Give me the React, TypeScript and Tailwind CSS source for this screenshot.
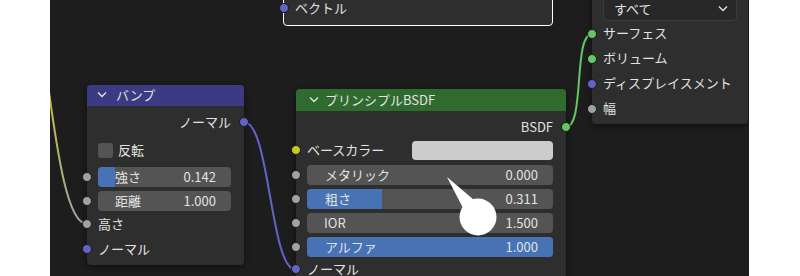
import type { ReactNode } from 'react';

const SOCKET: Record<string, string> = {
  gray: 'bg-[#a1a1a1]',
  purple: 'bg-[#6363c7]',
  yellow: 'bg-[#c7c729]',
  green: 'bg-[#63c763]',
};

function Socket({ color, side }: { color: string; side: 'left' | 'right' }) {
  return (
    <span
      className={`absolute top-1/2 -translate-y-1/2 w-[10px] h-[10px] rounded-full border border-[#1a1a1a] ${SOCKET[color]} ${
        side === 'left' ? 'left-[-5px]' : 'right-[-5px]'
      }`}
    />
  );
}

function Chevron() {
  return (
    <svg width="10" height="7" viewBox="0 0 10 7" className="shrink-0">
      <polyline points="1,1.5 5,5.5 9,1.5" fill="none" stroke="#e6e6e6" strokeWidth="1.3" />
    </svg>
  );
}

function Slider({ label, value, fill, wide }: { label: string; value: string; fill: number; wide?: boolean }) {
  return (
    <div className="relative w-full h-[20px] rounded-[4px] bg-[#545454] overflow-hidden flex items-center pb-[2px]">
      <div className="absolute left-0 top-0 bottom-0 bg-[#4772b3]" style={{ width: `${fill * 100}%` }} />
      <span className={`relative ${wide ? 'pl-[18px]' : 'pl-[17px]'}`}>{label}</span>
      <span className="relative ml-auto pr-[15px]">{value}</span>
    </div>
  );
}

// one socket row; plain text rows get 2px bottom padding to sit like Blender's labels
function Row({ children, className = '', flat }: { children: ReactNode; className?: string; flat?: boolean }) {
  return <div className={`relative flex items-center ${flat ? '' : 'pb-[2px]'} ${className}`}>{children}</div>;
}

function SliderRow({ label, value, fill, wide }: { label: string; value: string; fill: number; wide?: boolean }) {
  return (
    <Row flat className="pl-[11px] pr-[13px]">
      <Socket color="gray" side="left" />
      <Slider label={label} value={value} fill={fill} wide={wide} />
    </Row>
  );
}

export default function App() {
  return (
    <div className="w-[800px] h-[276px] bg-white flex font-['Noto_Sans_CJK_JP','Noto_Sans',sans-serif] text-[13px] leading-none text-[#e2e2e2]">
      <div className="w-[50px] shrink-0" />
      <div className="relative w-[699px] h-full shrink-0 overflow-hidden bg-[#1d1d1d]">
        {/* wires */}
        <svg className="absolute inset-0" width="699" height="276">
          <defs>
            <linearGradient id="yg" x1="0" y1="0" x2="0" y2="1">
              <stop offset="0" stopColor="#c7c729" />
              <stop offset="1" stopColor="#a1a1a1" />
            </linearGradient>
          </defs>
          <path d="M -4 70 C 8 160, 18 224, 37 224" fill="none" stroke="url(#yg)" strokeWidth="2" />
          <path d="M 194 122 C 220 122, 220 270, 246 270" fill="none" stroke="#6363c7" strokeWidth="2" />
          <path d="M 516 127 C 535 127, 523 34, 542 34" fill="none" stroke="#63c763" strokeWidth="2" />
        </svg>

        {/* vector node (selected) */}
        <div className="absolute left-[233px] top-[-30px] w-[270px] rounded-[4px] border border-white bg-[#2e2e2e] pt-[25px] pb-[5px]">
          <Row className="h-[24px] pl-[11px]">
            <Socket color="purple" side="left" />
            <span>ベクトル</span>
          </Row>
        </div>

        {/* material output */}
        <div className="absolute left-[542px] top-[-8px] w-[156px] rounded-[4px] bg-[#2e2e2e] shadow-[0_2px_6px_rgba(0,0,0,0.5)] pt-[4px] pb-[3px]">
          <div className="mx-[11px] h-[25px] rounded-[4px] bg-[#282828] border border-[#3c3c3c] flex items-center pl-[10px] pr-[8px]">
            <span>すべて</span>
            <span className="ml-auto">
              <Chevron />
            </span>
          </div>
          {[
            ['green', 'サーフェス'],
            ['green', 'ボリューム'],
            ['purple', 'ディスプレイスメント'],
            ['gray', '幅'],
          ].map(([c, label]) => (
            <Row key={label} className="h-[25px] pl-[11px]">
              <Socket color={c} side="left" />
              <span>{label}</span>
            </Row>
          ))}
        </div>

        {/* bump node */}
        <div className="absolute left-[37px] top-[85px] w-[157px] rounded-[4px] bg-[#2e2e2e] shadow-[0_2px_6px_rgba(0,0,0,0.5)] pb-[4px] flex flex-col">
          <div className="h-[21px] rounded-t-[4px] bg-[#3b3a82] flex items-center pl-[10px] pb-[2px] gap-[9px]">
            <Chevron />
            <span>バンプ</span>
          </div>
          <Row className="mt-[4px] h-[24px] justify-end pr-[13px]">
            <span>ノーマル</span>
            <Socket color="purple" side="right" />
          </Row>
          <Row flat className="mt-[4px] h-[24px] pl-[11px] gap-[5px]">
            <span className="w-[15px] h-[15px] rounded-[3px] bg-[#545454]" />
            <span className="pb-[2px]">反転</span>
          </Row>
          <div className="mt-[5px] flex flex-col gap-[4px]">
            <SliderRow label="強さ" value="0.142" fill={0.128} />
            <SliderRow label="距離" value="1.000" fill={0} />
          </div>
          <Row className="mt-[1px] h-[24px] pl-[11px]">
            <Socket color="gray" side="left" />
            <span>高さ</span>
          </Row>
          <Row className="mt-[1px] h-[24px] pl-[11px]">
            <Socket color="purple" side="left" />
            <span>ノーマル</span>
          </Row>
        </div>

        {/* principled bsdf node */}
        <div className="absolute left-[246px] top-[89px] w-[270px] h-[200px] rounded-[4px] bg-[#2e2e2e] shadow-[0_2px_6px_rgba(0,0,0,0.5)] flex flex-col">
          <div className="h-[22px] rounded-t-[4px] bg-[#2f6a2f] flex items-center pl-[13px] pb-[2px] gap-[6px]">
            <Chevron />
            <span>プリンシプルBSDF</span>
          </div>
          <Row className="mt-[4px] h-[24px] justify-end pr-[13px]">
            <span>BSDF</span>
            <Socket color="green" side="right" />
          </Row>
          <Row flat className="mt-[1px] h-[20px] pl-[11px] pr-[13px]">
            <Socket color="yellow" side="left" />
            <span className="pb-[2px]">ベースカラー</span>
            <span className="ml-auto w-[141px] h-[19px] rounded-[4px] bg-[#cccccc]" />
          </Row>
          <div className="mt-[5px] flex flex-col gap-[4px]">
            <SliderRow label="メタリック" value="0.000" fill={0} wide />
            <SliderRow label="粗さ" value="0.311" fill={0.305} wide />
            <SliderRow label="IOR" value="1.500" fill={0} />
            <SliderRow label="アルファ" value="1.000" fill={1} wide />
          </div>
          <Row className="h-[24px] pl-[11px]">
            <Socket color="purple" side="left" />
            <span>ノーマル</span>
          </Row>
        </div>

        {/* white speech-bubble marker */}
        <svg className="absolute inset-0 pointer-events-none" width="699" height="276">
          <polygon points="397,177 413,208 424,200" fill="#ffffff" />
          <circle cx="428" cy="217" r="18.5" fill="#ffffff" />
        </svg>
      </div>
      <div className="flex-1" />
    </div>
  );
}
